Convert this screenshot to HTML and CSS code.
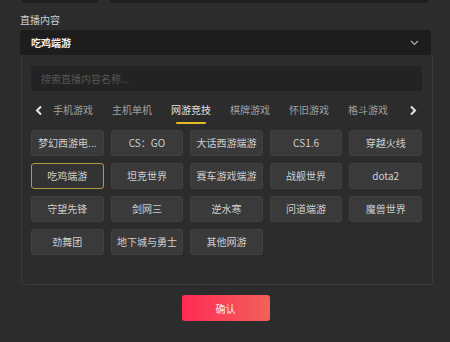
FILE: index.html
```html
<!DOCTYPE html>
<html lang="zh">
<head>
<meta charset="utf-8">
<link rel="stylesheet" href="styles.css">
</head>
<body>
<div class="page">
  <div class="top-row">
    <div class="top-box top-left"></div>
    <div class="top-box top-right"></div>
  </div>
  <div class="label">直播内容</div>
  <div class="select">
    <span class="select-value">吃鸡端游</span>
    <svg class="chev" width="9" height="6" viewBox="0 0 9 6"><path d="M1 1 L4.5 4.5 L8 1" fill="none" stroke="#b0b0b0" stroke-width="1.2"/></svg>
  </div>
  <div class="panel">
    <div class="search">搜索直播内容名称...</div>
    <div class="tabs">
      <svg class="arrow" width="8" height="11" viewBox="0 0 8 11"><path d="M6 1.5 L2 5.5 L6 9.5" fill="none" stroke="#e6e6e6" stroke-width="2"/></svg>
      <div class="tab-list">
        <span class="tab">手机游戏</span>
        <span class="tab">主机单机</span>
        <span class="tab active">网游竞技</span>
        <span class="tab">棋牌游戏</span>
        <span class="tab">怀旧游戏</span>
        <span class="tab">格斗游戏</span>
      </div>
      <svg class="arrow arrow-next" width="8" height="11" viewBox="0 0 8 11"><path d="M2 1.5 L6 5.5 L2 9.5" fill="none" stroke="#e6e6e6" stroke-width="2"/></svg>
    </div>
    <div class="grid">
      <div class="tile">梦幻西游电...</div>
      <div class="tile">CS：GO</div>
      <div class="tile">大话西游端游</div>
      <div class="tile">CS1.6</div>
      <div class="tile">穿越火线</div>
      <div class="tile selected">吃鸡端游</div>
      <div class="tile">坦克世界</div>
      <div class="tile">赛车游戏端游</div>
      <div class="tile">战舰世界</div>
      <div class="tile">dota2</div>
      <div class="tile">守望先锋</div>
      <div class="tile">剑网三</div>
      <div class="tile">逆水寒</div>
      <div class="tile">问道端游</div>
      <div class="tile">魔兽世界</div>
      <div class="tile">劲舞团</div>
      <div class="tile">地下城与勇士</div>
      <div class="tile">其他网游</div>
    </div>
  </div>
  <div class="actions">
    <button class="confirm">确认</button>
  </div>
</div>
</body>
</html>
```

FILE: styles.css
```css
html, body {
  margin: 0;
  padding: 0;
  background: #2c2c2c;
  width: 450px;
  height: 342px;
  overflow: hidden;
  font-family: "Noto Sans CJK SC", "Noto Sans", sans-serif;
  font-size: 10px;
}

.page {
  padding: 0 19px 0 20px;
}

.top-row {
  display: flex;
  height: 3px;
}

.top-box {
  background: #1f1f1f;
  border-radius: 0 0 3px 3px;
  height: 3px;
}

.top-left {
  width: 76px;
  margin-left: 2px;
}

.top-right {
  flex: 1;
  margin-left: 12px;
  margin-right: 2px;
}

.label {
  margin-top: 9px;
  height: 18px;
  line-height: 16px;
  color: #d0d0d0;
}

.select {
  height: 25px;
  background: #1d1d1d;
  border-radius: 3px 3px 0 0;
  display: flex;
  align-items: center;
  justify-content: space-between;
  padding: 0 11px;
  color: #f2f2f2;
  font-weight: bold;
}

.chev {
  margin-right: 1px;
}

.panel {
  margin: 1px -2px 0 1px;
  border: 1px solid #3b3b3b;
  border-top: none;
  border-radius: 0 0 4px 4px;
  padding: 10px 10px 28px 9px;
  height: 190px;
}

.search {
  height: 25px;
  background: #232323;
  border-radius: 2px;
  color: #555555;
  line-height: 25px;
  padding-left: 10px;
}

.tabs {
  display: flex;
  align-items: center;
  height: 26px;
  margin-top: 6px;
  padding: 0 5px 0 4px;
}

.tab-list {
  display: flex;
  gap: 19px;
  margin-left: 10px;
}

.arrow-next {
  margin-left: auto;
}

.tab {
  color: #a0a0a0;
  position: relative;
  line-height: 14px;
}

.tab.active {
  color: #e0e0e0;
}

.tab.active::after {
  content: "";
  position: absolute;
  left: 5px;
  right: 5px;
  bottom: -7px;
  height: 2px;
  background: #e7b923;
  border-radius: 1px;
}

.grid {
  margin-top: 7px;
  display: grid;
  grid-template-columns: repeat(5, 1fr);
  column-gap: 7px;
  row-gap: 7px;
}

.tile {
  height: 24px;
  line-height: 24px;
  background: #3a3a3a;
  border: 1px solid #414141;
  border-radius: 3px;
  color: #cfcfcf;
  text-align: center;
  white-space: nowrap;
  overflow: hidden;
}

.tile.selected {
  background: #333333;
  border-color: #b19a48;
}

.actions {
  display: flex;
  justify-content: center;
  margin-top: 10px;
}

.confirm {
  width: 88px;
  height: 26px;
  border: none;
  border-radius: 3px;
  background: linear-gradient(90deg, #ff2a55, #f16159);
  color: #f8e8ea;
  font-family: inherit;
  font-size: 10px;
  padding: 0;
}
```
